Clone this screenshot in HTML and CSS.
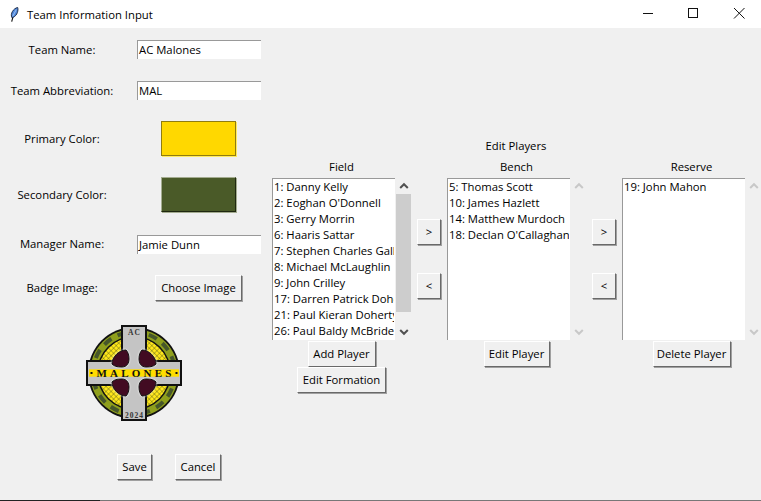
FILE: index.html
```html
<!DOCTYPE html>
<html lang="en">
<head>
    <meta charset="UTF-8">
    <meta name="viewport" content="width=device-width, initial-scale=1.0">
    <title>Team Information Input</title>
    <link rel="stylesheet" href="styles.css">
</head>
<body>
    <div class="titlebar">
        <svg class="feather" width="9" height="15" viewBox="0 0 10 17">
            <path d="M1.8 16.5 L3.6 10" stroke="#111" stroke-width="1.3" fill="none"/>
            <path d="M2 12 C0 8 3.5 1.5 8.6 0.6 C9.6 3.5 8.2 9.5 3.8 11.5 Z" fill="#4f88dc" stroke="#1d2a44" stroke-width="1.1"/>
            <path d="M3 10.5 L7 3" stroke="#cfe0f7" stroke-width="0.7" fill="none"/>
        </svg>
        <span class="title">Team Information Input</span>
        <div class="winbtns">
            <svg width="46" height="28" viewBox="0 0 46 28"><path d="M20 13.5 H30" stroke="#111"/></svg>
            <svg width="46" height="28" viewBox="0 0 46 28"><rect x="19.5" y="8.5" width="9" height="9" fill="none" stroke="#111"/></svg>
            <svg width="46" height="28" viewBox="0 0 46 28"><path d="M19 8 L29.5 18.5 M29.5 8 L19 18.5" stroke="#111" fill="none"/></svg>
        </div>
    </div>
    <div class="window">
        <div class="left">
            <div class="row row-name">
                <span class="label">Team Name:</span>
                <div class="entry">AC Malones</div>
            </div>
            <div class="row row-abbr">
                <span class="label">Team Abbreviation:</span>
                <div class="entry">MAL</div>
            </div>
            <div class="row row-primary">
                <span class="label">Primary Color:</span>
                <div class="swatch yellow"></div>
            </div>
            <div class="row row-secondary">
                <span class="label">Secondary Color:</span>
                <div class="swatch green"></div>
            </div>
            <div class="row row-manager">
                <span class="label">Manager Name:</span>
                <div class="entry">Jamie Dunn</div>
            </div>
            <div class="row row-badge">
                <span class="label">Badge Image:</span>
                <button class="btn btn-choose">Choose Image</button>
            </div>
            <div class="badge-wrap">
                <svg width="98" height="98" viewBox="-49 -49 98 98">
                    <defs>
                        <pattern id="lattice" width="3.6" height="3.6" patternUnits="userSpaceOnUse" patternTransform="rotate(45)">
                            <rect width="3.6" height="3.6" fill="#ffe61a"/>
                            <path d="M0 0 H3.6 M0 0 V3.6" stroke="#3f4a1c" stroke-width="0.7"/>
                        </pattern>
                    </defs>
                    <circle r="46" fill="#111"/>
                    <circle r="44.2" fill="#8f9f1c"/>
                    <circle r="41" fill="none" stroke="#46562a" stroke-width="4" stroke-dasharray="9 7"/>
                    <circle r="37" fill="#111"/>
                    <circle r="35.6" fill="url(#lattice)"/>
                    <circle r="21" fill="#eeeeee"/>
                    <path d="M-12 -47 H12 V-12 H47 V12 H12 V47 H-12 V12 H-47 V-12 H-12 Z" fill="#c4c4c4" stroke="#111" stroke-width="2"/>
                    <g class="blobs">
                        <path d="M-8 -23 C-15 -23 -22 -16 -22 -9 C-19 -6 -15 -6 -12 -6 C-7 -6 -5 -10 -5 -14 C-5 -18 -6 -21 -8 -23 Z"/>
                        <path d="M8 -23 C15 -23 22 -16 22 -9 C19 -6 15 -6 12 -6 C7 -6 5 -10 5 -14 C5 -18 6 -21 8 -23 Z"/>
                        <path d="M-8 23 C-15 23 -22 16 -22 9 C-19 6 -15 6 -12 6 C-7 6 -5 10 -5 14 C-5 18 -6 21 -8 23 Z"/>
                        <path d="M8 23 C15 23 22 16 22 9 C19 6 15 6 12 6 C7 6 5 10 5 14 C5 18 6 21 8 23 Z"/>
                    </g>
                    <rect x="-45" y="-3.7" width="90" height="7.4" fill="#ffdd00"/>
                    <text x="1.5" y="3.8" class="badge-name" text-anchor="middle">MALONES</text>
                    <rect x="-43.5" y="-1" width="2" height="2" fill="#111"/>
                    <rect x="41.5" y="-1" width="2" height="2" fill="#111"/>
                    <text x="0.5" y="-38.5" class="badge-small" text-anchor="middle">AC</text>
                    <text x="0.5" y="45" class="badge-small" text-anchor="middle">2024</text>
                </svg>
            </div>
            <div class="actions">
                <button class="btn btn-save">Save</button>
                <button class="btn btn-cancel">Cancel</button>
            </div>
        </div>
        <div class="players">
            <div class="players-title">Edit Players</div>
            <div class="lists">
                <div class="col">
                    <div class="col-title">Field</div>
                    <div class="listrow">
                        <ul class="listbox">
                            <li>1: Danny Kelly</li>
                            <li>2: Eoghan O'Donnell</li>
                            <li>3: Gerry Morrin</li>
                            <li>6: Haaris Sattar</li>
                            <li>7: Stephen Charles Gallagher</li>
                            <li>8: Michael McLaughlin</li>
                            <li>9: John Crilley</li>
                            <li>17: Darren Patrick Doherty</li>
                            <li>21: Paul Kieran Doherty</li>
                            <li>26: Paul Baldy McBride</li>
                        </ul>
                        <div class="scrollbar">
                            <svg class="arrow" width="16" height="16" viewBox="0 0 16 16"><path d="M4.2 10 L8 6.2 L11.8 10" fill="none" stroke="#505050" stroke-width="2"/></svg>
                            <div class="track"><div class="thumb"></div></div>
                            <svg class="arrow" width="16" height="16" viewBox="0 0 16 16"><path d="M4.2 6 L8 9.8 L11.8 6" fill="none" stroke="#505050" stroke-width="2"/></svg>
                        </div>
                    </div>
                    <button class="btn btn-add">Add Player</button>
                    <button class="btn btn-formation">Edit Formation</button>
                </div>
                <div class="moves">
                    <button class="btn btn-move">&gt;</button>
                    <button class="btn btn-move">&lt;</button>
                </div>
                <div class="col">
                    <div class="col-title">Bench</div>
                    <div class="listrow">
                        <ul class="listbox">
                            <li>5: Thomas Scott</li>
                            <li>10: James Hazlett</li>
                            <li>14: Matthew Murdoch</li>
                            <li>18: Declan O'Callaghan</li>
                        </ul>
                        <div class="scrollbar">
                            <svg class="arrow" width="16" height="16" viewBox="0 0 16 16"><path d="M4.2 10 L8 6.2 L11.8 10" fill="none" stroke="#c8c8c8" stroke-width="2"/></svg>
                            <div class="track"></div>
                            <svg class="arrow" width="16" height="16" viewBox="0 0 16 16"><path d="M4.2 6 L8 9.8 L11.8 6" fill="none" stroke="#c8c8c8" stroke-width="2"/></svg>
                        </div>
                    </div>
                    <button class="btn btn-edit">Edit Player</button>
                </div>
                <div class="moves">
                    <button class="btn btn-move">&gt;</button>
                    <button class="btn btn-move">&lt;</button>
                </div>
                <div class="col">
                    <div class="col-title">Reserve</div>
                    <div class="listrow">
                        <ul class="listbox">
                            <li>19: John Mahon</li>
                        </ul>
                        <div class="scrollbar">
                            <svg class="arrow" width="16" height="16" viewBox="0 0 16 16"><path d="M4.2 10 L8 6.2 L11.8 10" fill="none" stroke="#c8c8c8" stroke-width="2"/></svg>
                            <div class="track"></div>
                            <svg class="arrow" width="16" height="16" viewBox="0 0 16 16"><path d="M4.2 6 L8 9.8 L11.8 6" fill="none" stroke="#c8c8c8" stroke-width="2"/></svg>
                        </div>
                    </div>
                    <button class="btn btn-delete">Delete Player</button>
                </div>
            </div>
        </div>
    </div>
    <div class="bottomline"></div>
</body>
</html>
```
FILE: styles.css
```css
html, body {
    margin: 0;
    padding: 0;
    height: 501px;
    overflow: hidden;
}
body {
    font-family: "Open Sans", "Noto Sans", sans-serif;
    font-size: 11.3px;
    color: #000;
    background-color: #f0f0f0;
}
.titlebar {
    display: flex;
    align-items: center;
    height: 28px;
    background: #fff;
}
.feather {
    margin-left: 10px;
}
.title {
    margin-left: 8px;
}
.winbtns {
    display: flex;
    margin-left: auto;
}
.window {
    display: flex;
    height: 472px;
}
.bottomline {
    height: 1px;
    background: linear-gradient(to right, #222 100px, #777 100px);
}
.left {
    width: 272px;
    flex: none;
    display: flex;
    flex-direction: column;
}
.row {
    display: grid;
    grid-template-columns: 124px 13px 124px;
    align-items: center;
}
.label {
    text-align: center;
    line-height: 16px;
}
.row .entry, .row .swatch, .row .btn {
    grid-column: 3;
}
.row-name { margin-top: 12px; height: 19px; }
.row-abbr { margin-top: 22px; height: 19px; }
.row-primary { margin-top: 21px; height: 36px; }
.row-secondary { margin-top: 20px; height: 36px; }
.row-manager { margin-top: 21px; height: 20px; }
.row-badge { margin-top: 20px; height: 27px; }
.entry {
    height: 19px;
    line-height: 18px;
    padding-left: 1px;
    background: #fff;
    border-top: 1px solid #999;
    border-left: 1px solid #999;
    box-sizing: border-box;
    white-space: nowrap;
    overflow: hidden;
}
.swatch {
    justify-self: center;
    align-self: start;
    width: 75px;
    height: 35px;
    margin-left: -1px;
    box-sizing: border-box;
}
.yellow {
    background: #ffd800;
    border: 1px solid #8f7c10;
    box-shadow: 1px 1px 0 #ffeb60;
}
.green {
    background: #4a5a28;
    border: 1px solid;
    border-color: #a4ac90 #1f2810 #1f2810 #a4ac90;
    box-shadow: 1px 1px 0 #a4ac90;
}
.btn {
    display: block;
    height: 26px;
    padding: 0 0 1px;
    font: inherit;
    color: #000;
    background: #f0f0f0;
    border: 1px solid;
    border-color: #fff #696969 #696969 #fff;
    box-shadow: 1px 1px 0 #a0a0a0;
    box-sizing: border-box;
}
.btn-choose {
    justify-self: center;
    width: 87px;
    margin-left: -1px;
}
.badge-wrap {
    margin: 23px 0 0 85px;
    height: 98px;
}
.actions {
    display: flex;
    gap: 23px;
    margin: 32px 0 0 117px;
}
.btn-save { width: 35px; }
.btn-cancel { width: 46px; }
.players {
    flex: 1;
}
.players-title {
    margin: 110px 0 0 175px;
    width: 138px;
    height: 20px;
    line-height: 16px;
    text-align: center;
}
.lists {
    display: flex;
}
.col {
    width: 139px;
    display: flex;
    flex-direction: column;
}
.col-title {
    width: 139px;
    height: 20px;
    line-height: 18px;
    text-align: center;
}
.listrow {
    display: flex;
    height: 162px;
}
.listbox {
    width: 123px;
    height: 162px;
    margin: 0 1px 0 0;
    padding: 0 1px 0 1px;
    list-style: none;
    background: #fff;
    border-top: 1px solid #999;
    border-left: 1px solid #999;
    box-sizing: border-box;
    overflow: hidden;
}
.listbox li {
    height: 16px;
    line-height: 16px;
    white-space: nowrap;
    overflow: hidden;
}
.scrollbar {
    width: 15px;
    display: flex;
    flex-direction: column;
    background: #f0f0f0;
}
.arrow {
    display: block;
    flex: none;
}
.track {
    flex: 1;
}
.thumb {
    height: 118px;
    background: #cdcdcd;
}
.btn-add {
    align-self: center;
    width: 68px;
    margin-top: 1px;
}
.btn-formation {
    align-self: center;
    width: 89px;
}
.btn-edit {
    align-self: center;
    width: 66px;
    margin-top: 1px;
}
.btn-delete {
    align-self: center;
    width: 78px;
    margin-top: 1px;
}
.moves {
    width: 36px;
    display: flex;
    flex-direction: column;
    gap: 28px;
    padding-top: 61px;
    box-sizing: border-box;
}
.btn-move {
    width: 24px;
    margin-left: 6px;
}
.blobs path {
    fill: #420b22;
    stroke: #111;
    stroke-width: 1;
    filter: drop-shadow(0 0 0.8px #fff);
}
.badge-name {
    font-family: "Liberation Serif", serif;
    font-weight: bold;
    font-size: 11px;
    letter-spacing: 3.2px;
    fill: #111;
}
.badge-small {
    font-family: "Liberation Serif", serif;
    font-weight: bold;
    font-size: 7.5px;
    letter-spacing: 1px;
    fill: #333;
}
```
